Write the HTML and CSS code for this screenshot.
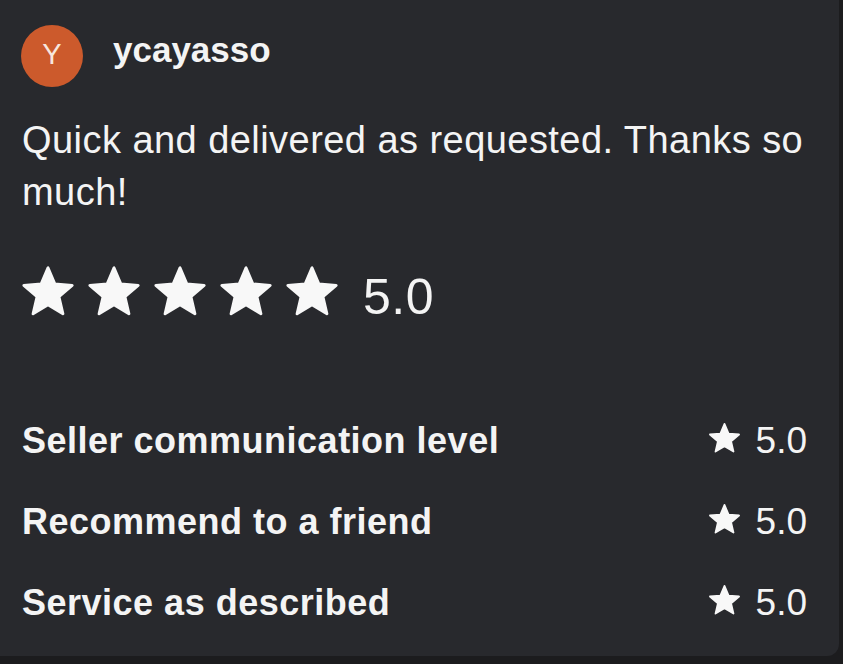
FILE: index.html
```html
<!DOCTYPE html>
<html lang="en">
<head>
<meta charset="utf-8">
<title>Review</title>
<link rel="stylesheet" href="styles.css">
</head>
<body>
<div class="card">
  <div class="header">
    <div class="avatar">Y</div>
    <div class="name">ycayasso</div>
  </div>
  <p class="review">Quick and delivered as requested. Thanks so much!</p>
  <div class="rating">
    <div class="stars">
      <svg class="star" viewBox="0 0 24 24"><path d="M12 17.27L18.18 21l-1.64-7.03L22 9.24l-7.19-.61L12 2 9.19 8.63 2 9.24l5.46 4.73L5.820 21z"/></svg>
      <svg class="star" viewBox="0 0 24 24"><path d="M12 17.27L18.18 21l-1.64-7.03L22 9.24l-7.19-.61L12 2 9.19 8.63 2 9.24l5.46 4.73L5.82 21z"/></svg>
      <svg class="star" viewBox="0 0 24 24"><path d="M12 17.27L18.18 21l-1.64-7.03L22 9.24l-7.19-.61L12 2 9.19 8.63 2 9.24l5.46 4.73L5.82 21z"/></svg>
      <svg class="star" viewBox="0 0 24 24"><path d="M12 17.27L18.18 21l-1.64-7.03L22 9.24l-7.19-.61L12 2 9.19 8.63 2 9.24l5.46 4.73L5.82 21z"/></svg>
      <svg class="star" viewBox="0 0 24 24"><path d="M12 17.27L18.18 21l-1.64-7.03L22 9.24l-7.19-.61L12 2 9.19 8.63 2 9.24l5.46 4.73L5.82 21z"/></svg>
    </div>
    <span class="score">5.0</span>
  </div>
  <div class="details">
    <div class="row">
      <span class="label">Seller communication level</span>
      <span class="value"><svg class="mini-star" viewBox="0 0 24 24"><path d="M12 17.27L18.18 21l-1.64-7.03L22 9.24l-7.19-.61L12 2 9.19 8.63 2 9.24l5.46 4.73L5.82 21z"/></svg>5.0</span>
    </div>
    <div class="row">
      <span class="label">Recommend to a friend</span>
      <span class="value"><svg class="mini-star" viewBox="0 0 24 24"><path d="M12 17.27L18.18 21l-1.64-7.03L22 9.24l-7.19-.61L12 2 9.19 8.63 2 9.24l5.46 4.73L5.82 21z"/></svg>5.0</span>
    </div>
    <div class="row">
      <span class="label">Service as described</span>
      <span class="value"><svg class="mini-star" viewBox="0 0 24 24"><path d="M12 17.27L18.18 21l-1.64-7.03L22 9.24l-7.19-.61L12 2 9.19 8.63 2 9.24l5.46 4.73L5.82 21z"/></svg>5.0</span>
    </div>
  </div>
</div>
</body>
</html>
```
FILE: styles.css
```css
html, body {
  margin: 0;
  padding: 0;
  background: #1c1c1e;
}
body {
  width: 843px;
  height: 664px;
  overflow: hidden;
  font-family: "Liberation Sans", Arial, sans-serif;
  color: #f4f4f4;
}
.card {
  box-sizing: border-box;
  width: 839px;
  height: 656px;
  background: #28292d;
  border-radius: 0 0 12px 0;
  padding: 25px 32px 0 22px;
}
.header {
  display: flex;
  align-items: flex-start;
}
.avatar {
  width: 62px;
  height: 62px;
  margin-left: -1px;
  border-radius: 50%;
  background: #cc5a2c;
  color: #f7e6de;
  font-size: 29px;
  display: flex;
  align-items: center;
  justify-content: center;
  line-height: 1;
  padding-bottom: 4px;
  box-sizing: border-box;
}
.name {
  margin-left: 30px;
  margin-top: 5px;
  font-size: 35px;
  font-weight: 700;
  line-height: 40px;
}
.review {
  margin: 27px 0 0 0;
  font-size: 38px;
  line-height: 52px;
  letter-spacing: 0.45px;
}
.rating {
  display: flex;
  align-items: flex-start;
  margin-top: 45px;
}
.stars {
  display: flex;
  gap: 8px;
  margin-left: -3px;
}
.star {
  width: 58px;
  height: 58px;
  display: block;
}
.star path, .mini-star path {
  fill: #f8f8f8;
  stroke: #f8f8f8;
  stroke-width: 1.2;
  stroke-linejoin: round;
}
.score {
  margin-left: 22px;
  font-size: 50px;
  line-height: 68px;
  letter-spacing: 0.5px;
}
.details {
  margin-top: 69px;
}
.row {
  display: flex;
  justify-content: space-between;
  align-items: center;
  height: 81px;
}
.label {
  font-size: 36px;
  font-weight: 700;
  line-height: 81px;
  letter-spacing: 0.5px;
}
.value {
  display: flex;
  align-items: center;
  font-size: 37px;
  line-height: 81px;
}
.mini-star {
  width: 35px;
  height: 35px;
  margin-right: 14px;
  margin-bottom: 4px;
}
```
